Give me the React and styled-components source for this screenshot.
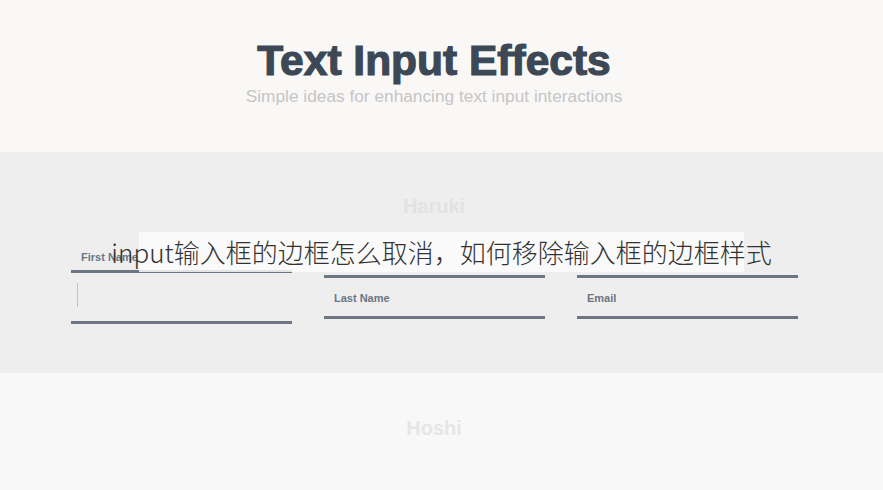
import React from "react";
import styled, { createGlobalStyle } from "styled-components";

const GlobalStyle = createGlobalStyle`
  html, body {
    margin: 0;
    padding: 0;
    background: #f9f8f7;
    font-family: "Liberation Sans", Arial, sans-serif;
  }
`;

const Page = styled.div`
  position: relative;
  width: 883px;
  height: 490px;
  overflow: hidden;
`;

const Content = styled.div`
  width: 868px;
`;

const Header = styled.header`
  height: 152px;
  box-sizing: border-box;
  padding-top: 36px;
  text-align: center;
  background: #f9f8f7;
  margin-right: -15px;
  padding-right: 15px;
`;

const Title = styled.h1`
  margin: 0;
  font-size: 42.5px;
  line-height: 50px;
  font-weight: 700;
  color: #3c4855;
  -webkit-text-stroke: 1.2px #3c4855;
`;

const Subtitle = styled.p`
  margin: 0;
  font-size: 17.3px;
  line-height: 21px;
  color: #c5c5c5;
`;

const Section = styled.section`
  height: ${(p) => p.$height}px;
  box-sizing: border-box;
  padding-top: ${(p) => p.$top}px;
  background: ${(p) => p.$bg};
  margin-right: -15px;
  padding-right: 15px;
`;

const SectionTitle = styled.h2`
  margin: 0;
  text-align: center;
  font-size: 20px;
  line-height: 24px;
  font-weight: 700;
  color: ${(p) => p.$color};
`;

const Fields = styled.div`
  display: grid;
  grid-template-columns: repeat(3, 221px);
  column-gap: 32px;
  align-items: center;
  margin: 44px 0 0 71px;
  height: 70px;
`;

const Field = styled.div`
  position: relative;
  height: ${(p) => (p.$active ? 48 : 38)}px;
  border-top: 3px solid #6b7682;
  border-bottom: 3px solid #6b7682;
`;

const Label = styled.label`
  position: absolute;
  left: 10px;
  top: ${(p) => (p.$active ? -22 : 14)}px;
  font-size: 11px;
  line-height: 13px;
  font-weight: 700;
  color: #6a7684;
`;

const Caret = styled.span`
  position: absolute;
  left: 6px;
  top: 10px;
  width: 1px;
  height: 24px;
  background: #c2c2c2;
`;

const Overlay = styled.div`
  position: absolute;
  left: 139px;
  top: 232px;
  width: 605px;
  height: 40px;
  background: rgba(252, 252, 252, 0.82);
  display: flex;
  justify-content: center;
  align-items: center;
`;

const OverlayText = styled.span`
  white-space: nowrap;
  font-family: "Noto Sans CJK SC", "Noto Sans", sans-serif;
  font-weight: 200;
  font-size: 26px;
  line-height: 30px;
  color: #333333;
`;

const fields = [
  { label: "First Name", active: true },
  { label: "Last Name" },
  { label: "Email" },
];

export default function App() {
  return (
    <Page>
      <GlobalStyle />
      <Content>
        <Header>
          <Title>Text Input Effects</Title>
          <Subtitle>Simple ideas for enhancing text input interactions</Subtitle>
        </Header>
        <Section $height={221} $top={42} $bg="#efeeee">
          <SectionTitle $color="#e2e2e2">Haruki</SectionTitle>
          <Fields>
            {fields.map((f) => (
              <Field key={f.label} $active={f.active}>
                <Label $active={f.active}>{f.label}</Label>
                {f.active && <Caret />}
              </Field>
            ))}
          </Fields>
        </Section>
        <Section $height={117} $top={43} $bg="#f8f8f8">
          <SectionTitle $color="#e6e6e6">Hoshi</SectionTitle>
        </Section>
      </Content>
      <Overlay>
        <OverlayText>input输入框的边框怎么取消，如何移除输入框的边框样式</OverlayText>
      </Overlay>
    </Page>
  );
}
